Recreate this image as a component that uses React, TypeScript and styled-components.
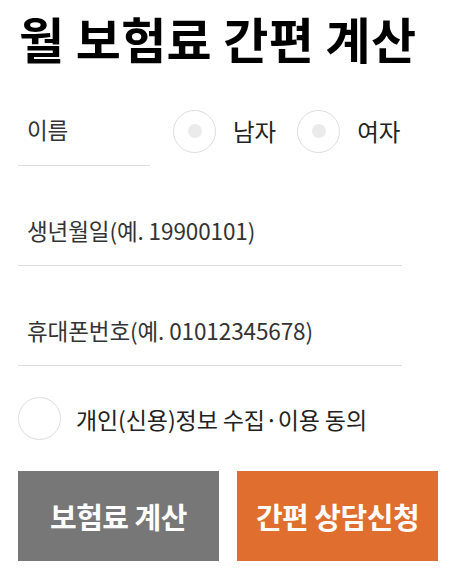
import React from "react";
import styled, { createGlobalStyle } from "styled-components";

const Global = createGlobalStyle`
  html, body { margin: 0; padding: 0; background: #fff; }
  body { font-family: "Noto Sans CJK KR", "Noto Sans", sans-serif; color: #333; }
  * { box-sizing: border-box; }
`;

const Page = styled.div`
  width: 460px;
  padding: 0 18px;
`;

const Title = styled.h1`
  margin: 0;
  padding: 7px 0 0 1px;
  font-size: 49px;
  line-height: 62px;
  font-weight: 700;
  color: #000;
  letter-spacing: 0.3px;
  white-space: nowrap;
`;

const Row = styled.div`
  display: flex;
  align-items: center;
  margin-top: 29px;
`;

const Field = styled.input<{ $w?: string }>`
  display: block;
  width: ${(p) => p.$w || "384px"};
  height: 68px;
  border: none;
  border-bottom: 1px solid #ddd;
  padding: 0 0 4px 9px;
  font-family: "Noto Sans CJK KR", sans-serif;
  font-size: 22.5px;
  font-weight: 400;
  color: #333;
  outline: none;
  background: transparent;
  letter-spacing: -0.1px;
  &::placeholder { color: #333; opacity: 1; }
`;

const NameField = styled(Field)`
  align-self: flex-start;
  padding-bottom: 5px;
`;

const RadioGroup = styled.div`
  display: flex;
  align-items: center;
  margin-left: 23px;
  margin-top: -2px;
`;

const RadioItem = styled.label`
  display: flex;
  align-items: center;
  gap: 17px;
  margin-right: 21px;
  font-size: 23.5px;
  font-weight: 400;
  color: #222;
`;

const Circle = styled.span<{ $dot?: boolean }>`
  width: 43px;
  height: 43px;
  border-radius: 50%;
  border: 1px solid #ddd;
  display: flex;
  align-items: center;
  justify-content: center;
  flex-shrink: 0;
  &::after {
    content: "";
    display: ${(p) => (p.$dot ? "block" : "none")};
    width: 14px;
    height: 14px;
    border-radius: 50%;
    background: #ebebeb;
  }
`;

const FullField = styled(Field)`
  margin-top: 32px;
`;

const Agree = styled.label`
  display: flex;
  align-items: center;
  gap: 15px;
  margin-top: 31px;
  font-size: 23px;
  font-weight: 400;
  color: #222;
  letter-spacing: -0.1px;
`;

const Buttons = styled.div`
  display: grid;
  grid-template-columns: 201px 201px;
  column-gap: 18px;
  margin-top: 31px;
`;

const Btn = styled.button<{ $bg: string }>`
  height: 90px;
  border: none;
  background: ${(p) => p.$bg};
  color: #fff;
  font-family: "Noto Sans CJK KR", sans-serif;
  font-size: 29px;
  font-weight: 700;
  letter-spacing: -0.5px;
  padding: 0;
`;

export default function App() {
  return (
    <Page>
      <Global />
      <Title>월 보험료 간편 계산</Title>
      <Row>
        <NameField $w="132px" placeholder="이름" />
        <RadioGroup>
          <RadioItem>
            <Circle $dot />
            남자
          </RadioItem>
          <RadioItem>
            <Circle $dot />
            여자
          </RadioItem>
        </RadioGroup>
      </Row>
      <FullField placeholder="생년월일(예. 19900101)" />
      <FullField placeholder="휴대폰번호(예. 01012345678)" />
      <Agree>
        <Circle />
        개인(신용)정보 수집·이용 동의
      </Agree>
      <Buttons>
        <Btn $bg="#777777">보험료 계산</Btn>
        <Btn $bg="#e06e2e">간편 상담신청</Btn>
      </Buttons>
    </Page>
  );
}
